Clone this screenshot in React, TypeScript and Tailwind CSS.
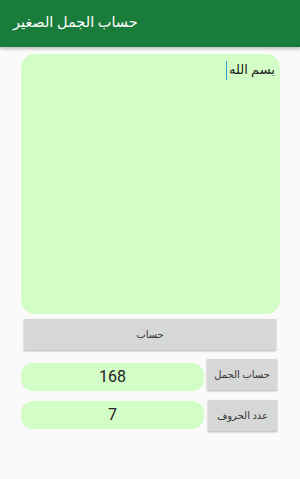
import React from "react";

export default function App() {
  const font = { fontFamily: 'Roboto, "Noto Sans", "DejaVu Sans", sans-serif' };
  return (
    <div className="w-[300px] h-[479px] bg-[#fafafa] flex flex-col" style={font}>
      <div className="h-[47px] bg-[#1a7c3a] flex items-center px-[13px] shadow-[0_2px_3px_rgba(0,0,0,0.25)] relative z-10">
        <span className="text-white text-[14.5px] leading-none" dir="rtl">حساب الجمل الصغير</span>
      </div>
      <div className="flex flex-col pl-[21px] pr-[20px]">
        <div className="mt-[7px] h-[260px] rounded-[14px] bg-[#d3fdc6] flex justify-end pt-[7px] pr-[5px]">
          <div className="flex items-start text-[13px] text-[#222] leading-[18px]" dir="rtl">
            <span>بسم الله</span>
            <span className="w-[1px] h-[19px] bg-[#2aa8c9] mr-[2px]"></span>
          </div>
        </div>
        <div className="mt-[5px] mx-[3px] mr-[4px] h-[31px] bg-[#d6d7d7] shadow-[0_1px_2px_rgba(0,0,0,0.3)] flex items-center justify-center text-[10px] text-[#333]" dir="rtl">
          حساب
        </div>
        <div className="mt-[9px] flex items-start">
          <div className="mt-[4px] w-[183px] h-[28px] rounded-[12px] bg-[#d3fdc6] flex items-center justify-center text-[16px] text-[#222]">168</div>
          <div className="ml-[3px] w-[70px] h-[31px] bg-[#d6d7d7] shadow-[0_1px_2px_rgba(0,0,0,0.3)] flex items-center justify-center text-[10px] text-[#333]" dir="rtl">حساب الجمل</div>
        </div>
        <div className="mt-[9px] flex items-start">
          <div className="mt-[1px] w-[183px] h-[28px] rounded-[12px] bg-[#d3fdc6] flex items-center justify-center text-[16px] text-[#222]">7</div>
          <div className="ml-[4px] w-[69px] h-[31px] bg-[#d6d7d7] shadow-[0_1px_2px_rgba(0,0,0,0.3)] flex items-center justify-center text-[10px] text-[#333]" dir="rtl">عدد الحروف</div>
        </div>
      </div>
    </div>
  );
}
